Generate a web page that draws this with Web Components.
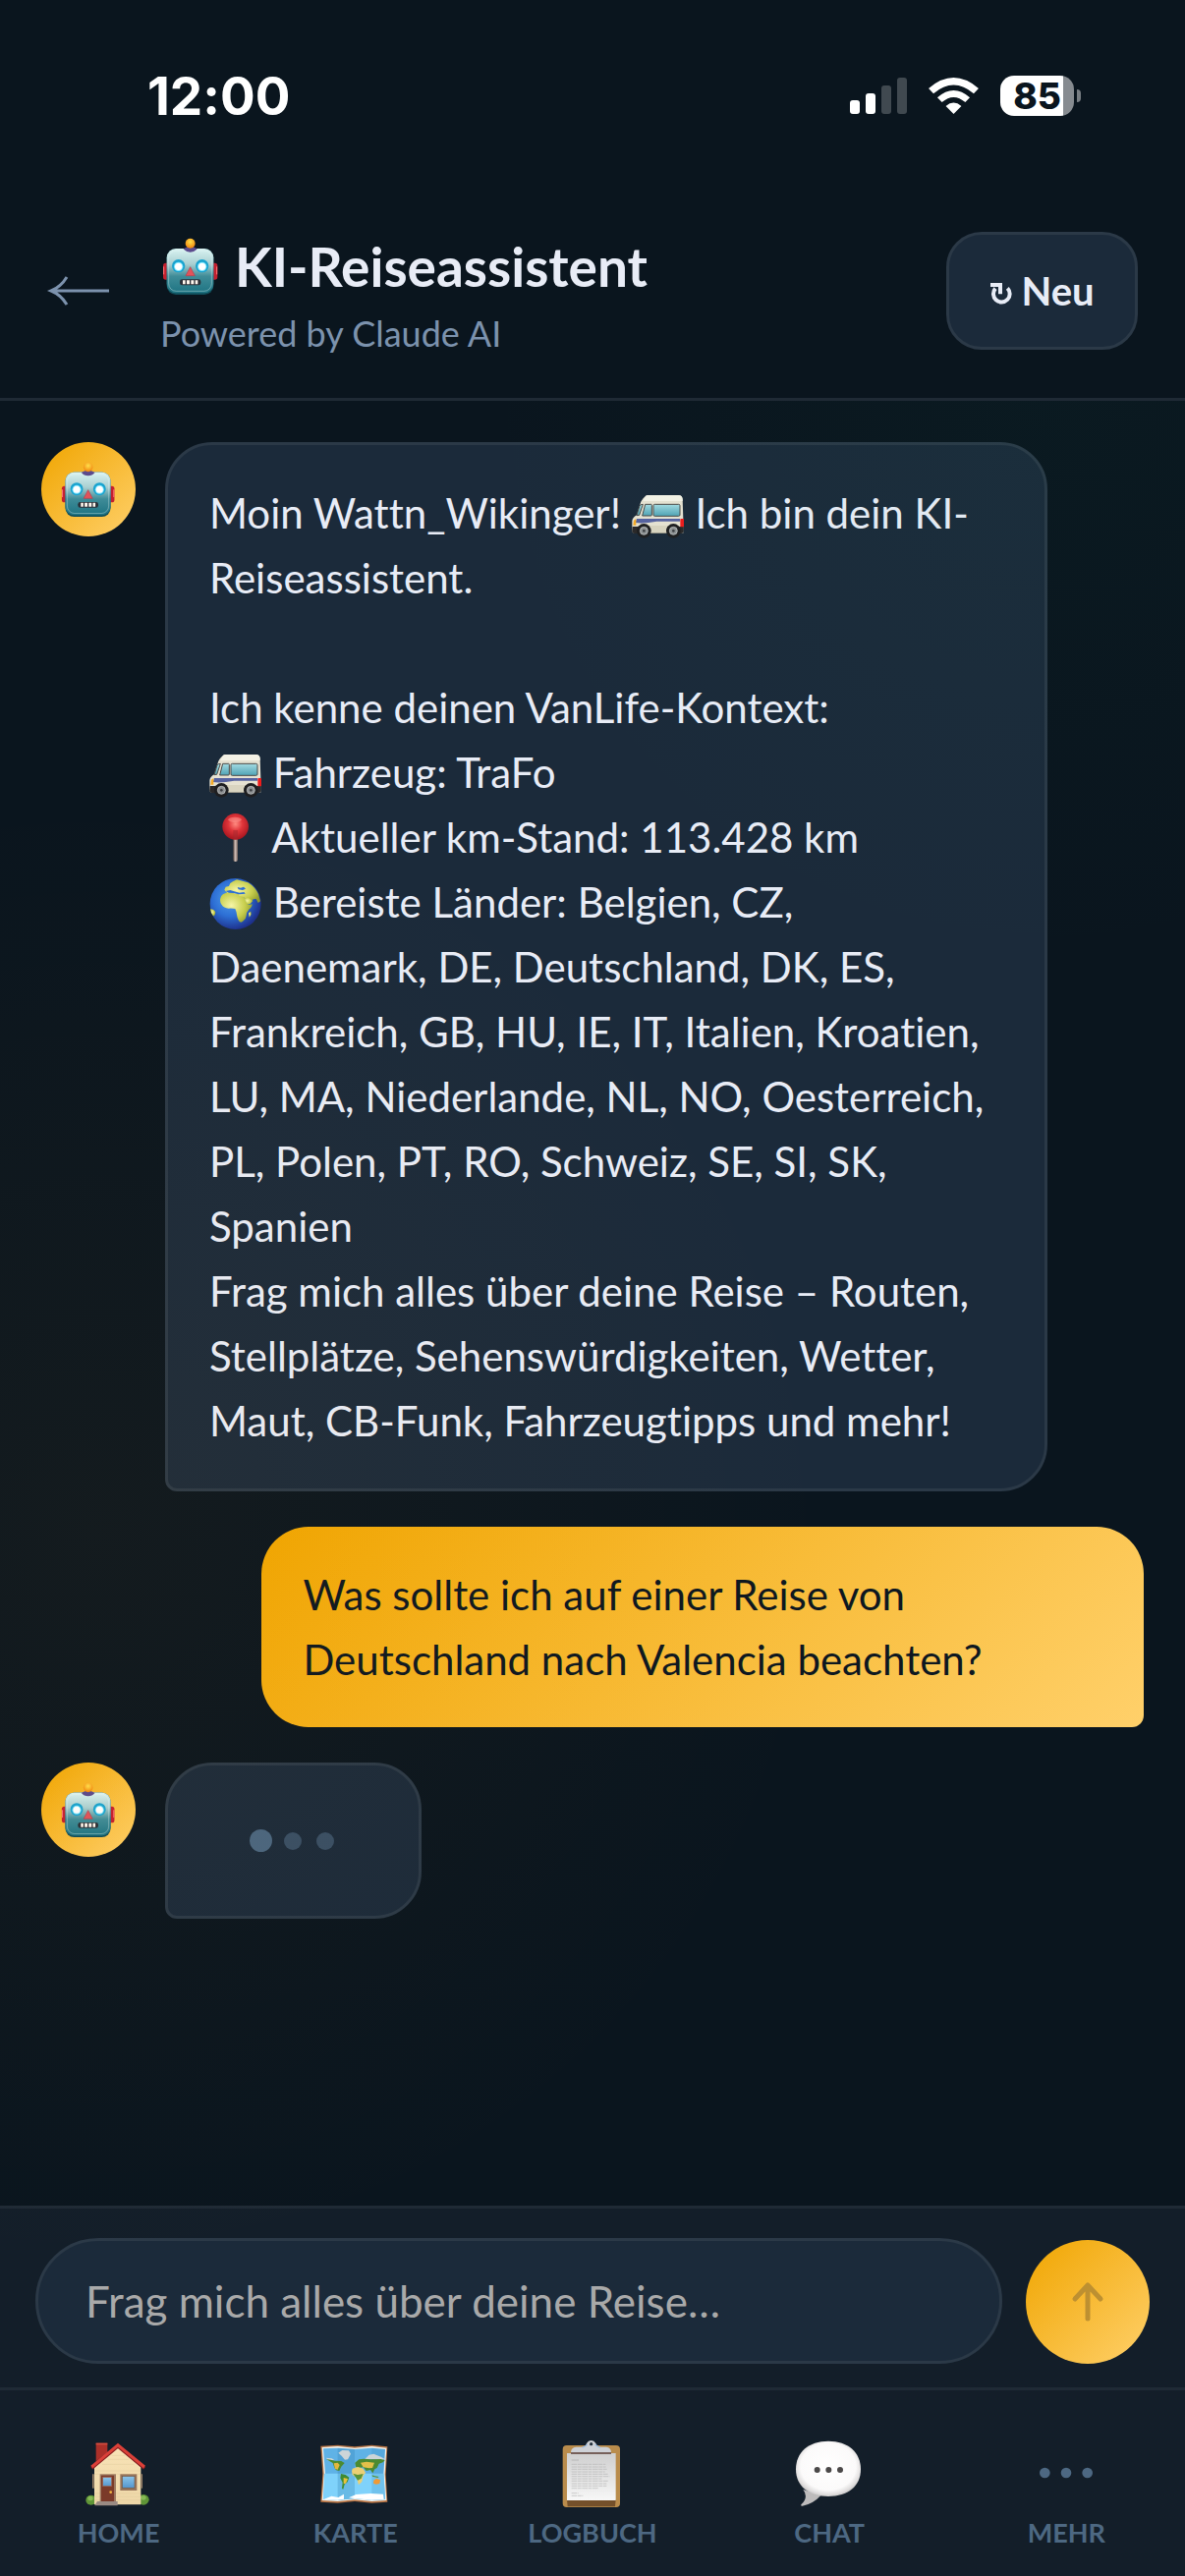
<!DOCTYPE html>
<html lang="de">
<head>
<meta charset="utf-8">
<meta name="viewport" content="width=device-width, initial-scale=1">
<title>KI-Reiseassistent</title>
<style>
  :root{
    --bg:#0a151e;--panel:#131e29;--card:#1b2a3a;--line:#1f2a35;--edge:#2b3947;
    --text:#e8ecf6;--muted:#7c92ad;--dim:#4d6882;
    --amber:linear-gradient(135deg,#f0a500,#ffd06a);
  }
  *,*::before,*::after{box-sizing:border-box}
  body{margin:0;background:var(--bg);color:var(--text);font-family:Lato,"Liberation Sans",sans-serif;font-variant-ligatures:none}
</style>
</head>
<body>
<travel-chat>
  <status-bar slot="top" time="12:00" battery="85"></status-bar>
  <chat-header slot="top" heading="KI-Reiseassistent" sub="Powered by Claude AI"></chat-header>

  <chat-message from="bot">Moin Wattn_Wikinger! <app-icon name="van"></app-icon> Ich bin dein KI-Reiseassistent.

Ich kenne deinen VanLife-Kontext:
<app-icon name="van"></app-icon> Fahrzeug: TraFo
<app-icon name="pin"></app-icon> Aktueller km-Stand: 113.428 km
<app-icon name="globe"></app-icon> Bereiste Länder: Belgien, CZ, Daenemark, DE, Deutschland, DK, ES, Frankreich, GB, HU, IE, IT, Italien, Kroatien, LU, MA, Niederlande, NL, NO, Oesterreich, PL, Polen, PT, RO, Schweiz, SE, SI, SK, Spanien
Frag mich alles über deine Reise – Routen, Stellplätze, Sehenswürdigkeiten, Wetter, Maut, CB-Funk, Fahrzeugtipps und mehr!</chat-message>
  <chat-message from="user">Was sollte ich auf einer Reise von Deutschland nach Valencia beachten?</chat-message>
  <chat-message from="bot"><typing-dots></typing-dots></chat-message>

  <chat-input slot="bottom" hint="Frag mich alles über deine Reise…"></chat-input>
  <tab-bar slot="bottom">
    <tab-item icon="house">Home</tab-item>
    <tab-item icon="map">Karte</tab-item>
    <tab-item icon="clipboard">Logbuch</tab-item>
    <tab-item icon="bubble">Chat</tab-item>
    <tab-item icon="more">Mehr</tab-item>
  </tab-bar>
</travel-chat>

<script>
const RESET = `*,*::before,*::after{box-sizing:border-box} button,input{font:inherit;color:inherit;margin:0}`;

// each entry: [viewBox, markup]
const ICONS = {
  robot: ["45 30 186 186", `
    <defs>
      <linearGradient id="h" x1="0" y1="0" x2="0" y2="1"><stop offset="0" stop-color="#d9f3f2"/><stop offset=".35" stop-color="#a9cfd1"/><stop offset=".62" stop-color="#3f8c98"/><stop offset="1" stop-color="#1d7382"/></linearGradient>
      <radialGradient id="b" cx=".5" cy=".35" r=".6"><stop offset="0" stop-color="#ffe14a"/><stop offset="1" stop-color="#f28a12"/></radialGradient>
    </defs>
    <rect x="54" y="113" width="20" height="51" rx="8" fill="#c41f2e"/><rect x="200" y="113" width="20" height="51" rx="8" fill="#c41f2e"/>
    <path d="M56 124v24M218 124v24" stroke="#ff7a78" stroke-width="3"/>
    <rect x="65" y="69" width="143" height="141" rx="28" fill="#0f4d5a"/>
    <rect x="65" y="69" width="143" height="136" rx="28" fill="url(#h)"/>
    <rect x="71" y="75" width="131" height="124" rx="23" fill="none" stroke="#eafafa" stroke-opacity=".35" stroke-width="3"/>
    <path d="M116 70q21-14 42 0q-8 10-21 10t-21-10z" fill="#5b4a8c"/>
    <circle cx="137" cy="53" r="15" fill="url(#b)"/>
    <circle cx="101" cy="122" r="20" fill="#19a3cf"/><circle cx="173" cy="122" r="20" fill="#19a3cf"/>
    <circle cx="101" cy="124" r="14" fill="#7fe6ff"/><circle cx="173" cy="124" r="14" fill="#7fe6ff"/>
    <circle cx="101" cy="124" r="11" fill="#fff"/><circle cx="173" cy="124" r="11" fill="#fff"/>
    <path d="M137 125l14 27h-28z" fill="#e2535a" stroke="#b83c4a" stroke-width="2" stroke-linejoin="round"/>
    <rect x="105" y="163" width="64" height="18" rx="7" fill="#2b3038"/>
    <path d="M114 166h8v12h-8zM126 166h9v12h-9zM139 166h9v12h-9zM152 166h8v12h-8z" fill="#fff7ee"/>`],
  van: ["42 66 162 162", `
    <defs><linearGradient id="w" x1="0" y1="0" x2="0" y2="1"><stop offset="0" stop-color="#a4dbe2"/><stop offset="1" stop-color="#4fa3b5"/></linearGradient></defs>
    <path d="M84 84q2-3 8-3h92q12 0 13 12l2 60v44H50q-7 0-7-9v-28q1-11 14-18l10-32q4-17 17-26z" fill="#e6e2d2"/>
    <path d="M84 84q2-3 8-3h92q12 0 13 12v6H76z" fill="#f4f2e6"/>
    <path d="M44 177h156v13q0 8-7 8H50q-7 0-7-8z" fill="#2a2829"/>
    <path d="M84 174h66v23H84z" fill="#d9d4c0"/>
    <path d="M76 109l-11 33-8 1 9-30q3-4 10-4z" fill="url(#w)" stroke="#4b4a48" stroke-width="3"/>
    <path d="M83 109h18q2 0 2 3v29q0 3-3 3H74z" fill="url(#w)" stroke="#4b4a48" stroke-width="3"/>
    <rect x="108" y="109" width="81" height="36" rx="4" fill="url(#w)" stroke="#4b4a48" stroke-width="3"/>
    <path d="M57 153h132v8H118q-40 8-65 4z" fill="#5662a0"/>
    <path d="M48 158l7-5v20h-9z" fill="#f7ab27"/>
    <rect x="190" y="153" width="11" height="25" rx="2" fill="#ee1c1c"/>
    <g fill="#1e1e20"><circle cx="79" cy="190" r="22"/><circle cx="169" cy="190" r="22"/></g>
    <g fill="#8d9092" stroke="#d0d2d2" stroke-width="2"><circle cx="79" cy="190" r="12"/><circle cx="169" cy="190" r="12"/></g>
    <g fill="#3c3d40"><circle cx="79" cy="190" r="4"/><circle cx="169" cy="190" r="4"/></g>`],
  pin: ["42 264 162 162", `
    <defs>
      <radialGradient id="p" cx=".5" cy=".4" r=".6"><stop offset="0" stop-color="#ff8a80"/><stop offset=".45" stop-color="#e0353a"/><stop offset="1" stop-color="#a5151f"/></radialGradient>
      <linearGradient id="n"><stop offset="0" stop-color="#5e504c"/><stop offset=".5" stop-color="#d3c0b8"/><stop offset="1" stop-color="#6b5b56"/></linearGradient>
    </defs>
    <rect x="115" y="330" width="14" height="78" rx="6" fill="url(#n)"/>
    <circle cx="122" cy="301" r="40" fill="url(#p)"/>
    <path d="M115 312h14v27h-14z" fill="#a32a30" opacity=".5"/>
    <ellipse cx="120" cy="280" rx="20" ry="8" fill="#ff9b94" opacity=".5"/>`],
  globe: ["42 460 162 162", `
    <defs><radialGradient id="g" cx=".4" cy=".4" r=".62"><stop offset="0" stop-color="#4f9fec"/><stop offset=".55" stop-color="#2c6fd6"/><stop offset="1" stop-color="#1c2f8c"/></radialGradient>
    <radialGradient id="l" cx=".35" cy=".45" r=".7"><stop offset="0" stop-color="#f6f6a8"/><stop offset=".6" stop-color="#c8cf4e"/><stop offset="1" stop-color="#8d9a2c"/></radialGradient></defs>
    <circle cx="122" cy="535" r="78" fill="url(#g)"/>
    <g fill="url(#l)">
      <path d="M76 518q3-12 14-15 12-6 26-4 5 5 15 3 10-2 15 4l6 17 9 15 12-2q1 8-9 15-9 10-9 20-1 11-9 16-8 8-14 0-5-10-6-19-1-10-5-18-10-2-20-1-15-1-21-11-7-9-4-20z"/>
      <path d="M88 492l4-9 10-2 4-9 8-5 12-6 34 9q20 11 32 35l6 22-7 5-6-12-9 1-8 11-12-7-8-11-14-3-4-6-10 1-8-8-10 3-5 1z"/>
      <path d="M149 519l12-3 14 10-8 9-8 2z"/>
      <path d="M162 563l7-5 1 9-6 9z"/>
      <path d="M45 551q13 1 16 10-2 11-7 11-8-9-9-21z"/>
    </g>
    <path d="M92 496l14-3 12 4 16 4 14-2 4 5-20 2-16-4-14-1zM128 484l10 2 9-3 6 6-9 4-13-2z" fill="#2c6fd6"/>`],
  house: ["77 42 210 210", `
    <defs><linearGradient id="hw" x1="0" y1="0" x2="0" y2="1"><stop offset="0" stop-color="#f8e3b6"/><stop offset="1" stop-color="#eed7a8"/></linearGradient>
    <linearGradient id="gl" x1="0" y1="0" x2="0" y2="1"><stop offset="0" stop-color="#8cc5ea"/><stop offset="1" stop-color="#5596cd"/></linearGradient></defs>
    <ellipse cx="97" cy="224" rx="16" ry="15" fill="#5f9437"/><ellipse cx="257" cy="223" rx="17" ry="16" fill="#5f9437"/>
    <ellipse cx="95" cy="219" rx="8" ry="7" fill="#86b955"/><ellipse cx="257" cy="217" rx="8" ry="7" fill="#86b955"/>
    <path d="M112 50h35v28l-35 28z" fill="#ab3029"/><path d="M112 50h35v5h-35z" fill="#d24e40"/>
    <path d="M107 238V124l72-62 70 62v114z" fill="url(#hw)"/>
    <path d="M107 135h142M107 145h142M107 204h142M107 214h142M107 224h142M131 115h98M148 100h64M160 88h40" stroke="#dcc294" stroke-width="1"/>
    <path d="M101 145h5v43h-5zM250 145h4v43h-4z" fill="#9c8368"/>
    <path d="M99 127l80-67 81 67" fill="none" stroke="#8c1f20" stroke-width="10"/>
    <path d="M99 123l80-67 81 67" fill="none" stroke="#db4038" stroke-width="9"/>
    <rect x="124" y="145" width="49" height="86" fill="#9d7a61"/><rect x="128" y="149" width="39" height="82" fill="#7b3a29"/>
    <rect x="133" y="154" width="27" height="28" fill="url(#gl)" stroke="#a0614a" stroke-width="2"/>
    <circle cx="157" cy="200" r="4" fill="#f4b541"/>
    <rect x="186" y="145" width="51" height="50" fill="#97745a"/><rect x="192" y="151" width="38" height="36" fill="url(#gl)" stroke="#6f5543" stroke-width="2"/>
    <path d="M116 228h62v13h-70z" fill="#9a8b83"/>`],
  map: ["800 42 210 210", `
    <path d="M798 59l52-3 52 5 52-5 48 5-5 85 5 84-48 3-52-5-52 5-52-3 6-86z" fill="#b77546"/>
    <path d="M802 63l48-3 52 5 52-5 45 5-5 80 5 80-45 3-52-5-52 5-48-3 6-82z" fill="#f2f3ee"/>
    <path d="M806 67l44-2 52 4 52-4 41 4-5 76 5 77-41 2-52-5-52 5-44-3 6-77z" fill="#5fb2e6"/>
    <path d="M809 143h182l4 79-41 2-52-5-52 5-44-3z" fill="#7fd2fb"/>
    <path d="M850 65l52 4v150l-52 5z" fill="#2f7cb0" opacity=".28"/>
    <path d="M954 65l41 4-5 76 5 77-41 2z" fill="#2f7cb0" opacity=".18"/>
    <path d="M809 221l22-9 21 4 17-10v15l-19 3-44-2zM884 217l22-10 45-3 38 2 2 16-37 2-52-5z" fill="#fff"/>
    <path d="M852 80l12-8 20 1 6 10-9 17-9 1-10-12zM815 95l17 2 8 5-20 1zM946 86l14-3 22 9 12 7-14 4-24-4-24 1z" fill="#ccd5d8"/>
    <path d="M815 99l14 2 12 3 20 1 10 6-10 11-6 13-10-2-5-8-5-14-10-6z" fill="#4b8a31"/>
    <path d="M838 112l12-2 6 7-6 14-8-2z" fill="#e3b73e"/>
    <path d="M860 144l14 3 11 8-5 14-9 7-4 15-4-2 2-18-7-14z" fill="#3f8b33"/>
    <path d="M868 156l13 3-6 14-7 2z" fill="#e9c23c"/>
    <path d="M903 110l12-10 15-2 22 2 30-1 12 4-6 6-12 4-6 13-7 4-6 12-7-10-13 3-9-11-14 2-9-4z" fill="#4b8a31"/>
    <path d="M920 110l18-3 24 3-6 16-10 1-18-3z" fill="#e3c04a"/>
    <path d="M895 128l17-5 16 5 7 12-8 12-3 16-10 10-6-22-13-9-2-11z" fill="#ebd075"/>
    <path d="M897 143l14 4 17-3-6 14-11 6z" fill="#58953a"/>
    <path d="M960 164l8-6 12 5-2 11-11 2-8-3z" fill="#f19a34"/><path d="M955 148l9 3 12 2-4 3-16-4z" fill="#55933a"/>`],
  clipboard: ["84 42 210 210", `
    <defs><linearGradient id="pp" x1="0" y1="0" x2="0" y2="1"><stop offset="0" stop-color="#cfcfcf"/><stop offset="1" stop-color="#f7f7f7"/></linearGradient></defs>
    <rect x="98" y="57" width="175" height="189" rx="12" fill="#b98c4c"/>
    <path d="M111 222h149l-2 22H113z" fill="#74502a"/>
    <path d="M111 81h149v144H111z" fill="url(#pp)"/>
    <g stroke-width="2"><path d="M125 102h22" stroke="#aaa"/>
    <path d="M125 115h104M125 123h105M125 130h108M125 138h102M125 145h111M125 152h116M125 159h92M125 166h111M125 174h107M125 181h107M125 188h82M125 203h21M125 211h35" stroke="#b6b6b6" stroke-dasharray="17 2 11 2"/></g>
    <path d="M123 78h123v6H123z" fill="#76605a"/>
    <path d="M123 78q0-14 16-16h20q10-2 12-11 5-9 14-9t14 9q3 9 12 11h20q15 2 15 16z" fill="#ced1d6"/>
    <path d="M158 63q11-2 15-9M212 63q-11-2-15-9" fill="none" stroke="#96b9e0" stroke-width="4"/>
    <circle cx="185" cy="53" r="5" fill="#24303b"/>`],
  bubble: ["807 42 210 210", `
    <defs><radialGradient id="c" cx=".5" cy=".46" r=".56"><stop offset="0" stop-color="#fff"/><stop offset=".76" stop-color="#fbfafa"/><stop offset=".92" stop-color="#dddbdb"/><stop offset="1" stop-color="#bab8b8"/></radialGradient></defs>
    <path d="M832 192q18 24-6 46-2 5 4 4 33-6 56-32z" fill="#bdbbbb"/>
    <path d="M909 44c60 0 99 34 99 86s-38 83-99 83-99-31-99-83 39-86 99-86z" fill="url(#c)"/>
    <g fill="#4b4949"><circle cx="875" cy="132" r="9"/><circle cx="910" cy="132" r="9"/><circle cx="945" cy="132" r="9"/></g>`],
  more: ["0 0 210 210", `<g fill="#4d6882"><circle cx="40" cy="99" r="16"/><circle cx="105" cy="99" r="16"/><circle cx="170" cy="99" r="16"/></g>`],
  back: ["0 0 66 36", `<path d="M63 18H5M20 4Q14 14 4 18Q14 22 20 32" fill="none" stroke="currentColor" stroke-width="3"/>`],
  reload: ["172 177 72 72", `<path d="M227 196A25 25 0 1 1 190 197M175 186H205V214" fill="none" stroke="currentColor" stroke-width="12"/>`],
  up: ["0 0 34 42", `<path d="M17 38V4M4 18L17 4L30 18" fill="none" stroke="currentColor" stroke-width="5" stroke-linecap="round" stroke-linejoin="round"/>`],
  signal: ["0 0 58 37", `<g fill="#fff"><rect y="23" width="10" height="14" rx="3"/><rect x="16" y="16" width="10" height="21" rx="3"/><g opacity=".22"><rect x="32" y="8" width="10" height="29" rx="3"/><rect x="48" width="10" height="37" rx="3"/></g></g>`],
  wifi: ["315 56 154 112", `<g fill="#fff"><path d="M392 168l-24-24q24-21 48 0z"/><path d="M342 117q50-44 100 0l-14 15q-36-31-72 0z"/><path d="M315 89q77-66 154 0l-15 16q-62-53-124 0z"/></g>`],
};

class AppIcon extends HTMLElement {
  constructor() { super(); this.attachShadow({ mode: "open" }); }
  connectedCallback() {
    const [box, art] = ICONS[this.getAttribute("name")];
    this.shadowRoot.innerHTML = `
      <style>
        :host{display:inline-flex;width:54px;height:54px;vertical-align:-15px;line-height:0;white-space:normal}
        svg{display:block;width:100%;height:100%;overflow:visible}
      </style>
      <svg viewBox="${box}" aria-hidden="true">${art}</svg>`;
  }
}
customElements.define("app-icon", AppIcon);

class TravelChat extends HTMLElement {
  constructor() {
    super();
    this.attachShadow({ mode: "open" }).innerHTML = `
      <style>${RESET}
        :host{display:flex;flex-direction:column;min-height:100vh;position:relative}
        main{flex:1;display:flex;flex-direction:column;gap:36px;padding:42px}
        /* soft colour wash over the conversation */
        .glow{position:absolute;inset:408px 0 192px;pointer-events:none;
          background:radial-gradient(circle at 8% 57%,rgba(240,160,40,.045),transparent 760px),
            radial-gradient(circle at 88% 0,rgba(20,160,110,.035),transparent 580px)}
      </style>
      <slot name="top"></slot>
      <main><slot></slot></main>
      <slot name="bottom"></slot>
      <div class="glow"></div>`;
  }
}
customElements.define("travel-chat", TravelChat);

class StatusBar extends HTMLElement {
  constructor() { super(); this.attachShadow({ mode: "open" }); }
  connectedCallback() {
    this.shadowRoot.innerHTML = `
      <style>${RESET}
        :host{display:flex;align-items:center;justify-content:space-between;height:186px;padding:9px 106px 0 150px;
          color:#fff;font-family:Inter,"Liberation Sans",sans-serif}
        .time{font-size:53px;font-weight:700}
        .right{display:flex;align-items:center}
        .signal{width:58px;height:37px}
        .wifi{width:51px;height:37px;margin:0 22px}
        .bat{display:flex;align-items:center;justify-content:center;width:75px;height:41px;border-radius:14px;
          background:linear-gradient(90deg,#fff 64px,#868b90 64px);color:#0a151e;font-size:37px;font-weight:800;line-height:41px}
        .nub{width:4px;height:13px;margin-left:3px;border-radius:0 6px 6px 0;background:#777d82}
      </style>
      <span class="time">${this.getAttribute("time")}</span>
      <span class="right">
        <app-icon class="signal" name="signal"></app-icon>
        <app-icon class="wifi" name="wifi"></app-icon>
        <span class="bat">${this.getAttribute("battery")}</span><span class="nub"></span>
      </span>`;
  }
}
customElements.define("status-bar", StatusBar);

class ChatHeader extends HTMLElement {
  constructor() { super(); this.attachShadow({ mode: "open" }); }
  connectedCallback() {
    this.shadowRoot.innerHTML = `
      <style>${RESET}
        :host{display:block}
        header{display:flex;align-items:center;padding:46px 48px 45px;border-bottom:3px solid var(--line)}
        .back{border:0;background:none;padding:0;color:var(--muted);margin-right:49px}
        .back app-icon{display:block;width:66px;height:36px}
        .titles{flex:1}
        h1{display:flex;align-items:center;gap:14px;margin:0 0 8px;font-size:55px;font-weight:700;line-height:78px}
        h1 app-icon{width:62px;height:62px}
        p{margin:0;font-size:36px;line-height:42px;color:var(--muted)}
        .new{display:flex;align-items:center;justify-content:center;gap:8px;width:195px;height:120px;border:3px solid var(--edge);
          border-radius:36px;background:var(--card);font-size:40px;font-weight:700}
        .new app-icon{width:24px;height:24px;margin-top:6px}
      </style>
      <header>
        <button class="back" aria-label="Zurück"><app-icon name="back"></app-icon></button>
        <div class="titles">
          <h1><app-icon name="robot"></app-icon>${this.getAttribute("heading")}</h1>
          <p>${this.getAttribute("sub")}</p>
        </div>
        <button class="new"><app-icon name="reload"></app-icon>Neu</button>
      </header>`;
  }
}
customElements.define("chat-header", ChatHeader);

class ChatMessage extends HTMLElement {
  constructor() { super(); this.attachShadow({ mode: "open" }); }
  connectedCallback() {
    const bot = this.getAttribute("from") === "bot";
    this.shadowRoot.innerHTML = `
      <style>${RESET}
        :host{display:flex;align-items:flex-start;gap:30px}
        :host([from=user]){justify-content:flex-end}
        .avatar{flex:none;display:grid;place-items:center;width:96px;height:96px;border-radius:50%;background:var(--amber)}
        .avatar app-icon{width:60px;height:60px}
        .bubble{max-width:80%;padding:36px 42px;border:3px solid var(--edge);border-radius:48px 48px 48px 12px;
          background:var(--card);font-size:42px;line-height:66px;white-space:pre-line}
        :host([from=user]) .bubble{border:0;border-radius:48px 48px 12px 48px;background:var(--amber);color:#0d1720}
      </style>
      ${bot ? `<div class="avatar"><app-icon name="robot"></app-icon></div>` : ""}
      <div class="bubble"><slot></slot></div>`;
  }
}
customElements.define("chat-message", ChatMessage);

class TypingDots extends HTMLElement {
  constructor() {
    super();
    this.attachShadow({ mode: "open" }).innerHTML = `
      <style>
        :host{display:flex;align-items:center;justify-content:center;gap:15px;width:171px;height:81px}
        i{width:18px;height:18px;border-radius:50%;background:#384e64}
        i:first-of-type{width:23px;height:23px;margin:0 -3px;background:#49657f}
      </style>
      <i></i><i></i><i></i>`;
  }
}
customElements.define("typing-dots", TypingDots);

class ChatInput extends HTMLElement {
  constructor() { super(); this.attachShadow({ mode: "open" }); }
  connectedCallback() {
    this.shadowRoot.innerHTML = `
      <style>${RESET}
        :host{display:block}
        form{display:flex;align-items:flex-end;gap:24px;margin:0;padding:30px 36px 24px;background:var(--panel);border-top:3px solid var(--line)}
        input{flex:1;min-width:0;height:128px;padding:0 48px;border:3px solid var(--edge);border-radius:64px;background:var(--card);font-size:44px}
        input::placeholder{color:#a9a9a9;opacity:1}
        button{display:grid;place-items:center;width:126px;height:126px;border:0;border-radius:50%;background:var(--amber);color:#bd9031}
        button app-icon{width:34px;height:42px}
      </style>
      <form>
        <input type="text" aria-label="Nachricht" placeholder="${this.getAttribute("hint")}">
        <button type="button" aria-label="Senden"><app-icon name="up"></app-icon></button>
      </form>`;
  }
}
customElements.define("chat-input", ChatInput);

class TabBar extends HTMLElement {
  constructor() {
    super();
    this.attachShadow({ mode: "open" }).innerHTML = `
      <style>
        :host{display:block}
        nav{display:grid;grid-auto-flow:column;grid-auto-columns:1fr;background:var(--panel);border-top:3px solid var(--line);padding:51px 0 26px}
      </style>
      <nav><slot></slot></nav>`;
  }
}
customElements.define("tab-bar", TabBar);

class TabItem extends HTMLElement {
  constructor() { super(); this.attachShadow({ mode: "open" }); }
  connectedCallback() {
    this.shadowRoot.innerHTML = `
      <style>
        :host{display:block}
        a{display:flex;flex-direction:column;align-items:center;gap:6px;color:var(--dim);text-decoration:none;
          font-size:27px;font-weight:700;line-height:36px;text-transform:uppercase}
        app-icon{width:70px;height:70px}
      </style>
      <a href="#"><app-icon name="${this.getAttribute("icon")}"></app-icon><span><slot></slot></span></a>`;
  }
}
customElements.define("tab-item", TabItem);
</script>
</body>
</html>
